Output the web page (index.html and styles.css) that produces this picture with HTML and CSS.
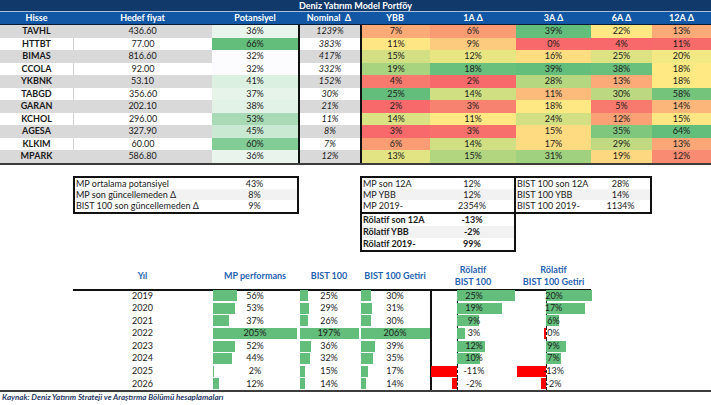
FILE: index.html
```html
<!DOCTYPE html>
<html lang="tr">
<head>
<meta charset="utf-8">
<title>Deniz Yatırım Model Portföy</title>
<link rel="stylesheet" href="styles.css">
</head>
<body>
<div class="sheet">
  <div class="title">Deniz Yatırım Model Portföy</div>
  <div class="row head">
    <div>Hisse</div><div>Hedef fiyat</div><div>Potansiyel</div><div>Nominal&nbsp; Δ</div><div>YBB</div><div>1A Δ</div><div>3A Δ</div><div>6A Δ</div><div>12A Δ</div>
  </div>
  <div class="data">
    <div class="row g"><div class="tk">TAVHL</div><div class="tp">436.60</div><div style="background:#e9f5ec">36%</div><div class="nom">1239%</div><div class="ybb" style="background:#fcaa78">7%</div><div style="background:#f99c74">6%</div><div style="background:#63be7b">39%</div><div style="background:#ffe884">22%</div><div style="background:#fcaa78">13%</div></div>
    <div class="row"><div class="tk">HTTBT</div><div class="tp">77.00</div><div style="background:#63be7b">66%</div><div class="nom">383%</div><div class="ybb" style="background:#ffe684">11%</div><div style="background:#fdcb7e">9%</div><div style="background:#f8696b">0%</div><div style="background:#f8696b">4%</div><div style="background:#f86b6b">11%</div></div>
    <div class="row g"><div class="tk">BIMAS</div><div class="tp">816.60</div><div style="background:#fcfcff">32%</div><div class="nom">417%</div><div class="ybb" style="background:#d2df82">15%</div><div style="background:#e8e583">12%</div><div style="background:#fedd81">16%</div><div style="background:#dde283">25%</div><div style="background:#f2e884">20%</div></div>
    <div class="row"><div class="tk">CCOLA</div><div class="tp">92.00</div><div style="background:#fcfcff">32%</div><div class="nom">332%</div><div class="ybb" style="background:#a8d47f">19%</div><div style="background:#69bf7c">18%</div><div style="background:#63be7b">39%</div><div style="background:#68c07c">38%</div><div style="background:#fee983">18%</div></div>
    <div class="row g"><div class="tk">YKBNK</div><div class="tp">53.10</div><div style="background:#dcf0e1">41%</div><div class="nom">152%</div><div class="ybb" style="background:#f87a6e">4%</div><div style="background:#f8696b">2%</div><div style="background:#b5d780">28%</div><div style="background:#fbaa78">13%</div><div style="background:#fee983">18%</div></div>
    <div class="row"><div class="tk">TABGD</div><div class="tp">356.60</div><div style="background:#e6f4e9">37%</div><div class="nom">30%</div><div class="ybb" style="background:#63be7b">25%</div><div style="background:#cfdf81">14%</div><div style="background:#fcbb7b">11%</div><div style="background:#bcd880">30%</div><div style="background:#74c47c">58%</div></div>
    <div class="row g"><div class="tk">GARAN</div><div class="tp">202.10</div><div style="background:#e2f2e6">38%</div><div class="nom">21%</div><div class="ybb" style="background:#f8696b">2%</div><div style="background:#f88270">3%</div><div style="background:#fee883">18%</div><div style="background:#f87a6e">5%</div><div style="background:#fcb679">14%</div></div>
    <div class="row"><div class="tk">KCHOL</div><div class="tp">296.00</div><div style="background:#a8dab5">53%</div><div class="nom">11%</div><div class="ybb" style="background:#dbe283">14%</div><div style="background:#ffe884">11%</div><div style="background:#d2df82">24%</div><div style="background:#fba176">12%</div><div style="background:#fee683">15%</div></div>
    <div class="row g"><div class="tk">AGESA</div><div class="tp">327.90</div><div style="background:#cae9d2">45%</div><div class="nom">8%</div><div class="ybb" style="background:#f8696b">3%</div><div style="background:#f8706c">3%</div><div style="background:#fedb80">15%</div><div style="background:#7fc77d">35%</div><div style="background:#63be7b">64%</div></div>
    <div class="row"><div class="tk">KLKIM</div><div class="tp">60.00</div><div style="background:#82cc95">60%</div><div class="nom">7%</div><div class="ybb" style="background:#fa9d75">6%</div><div style="background:#cfdf81">14%</div><div style="background:#feda80">17%</div><div style="background:#c1da81">29%</div><div style="background:#fba677">13%</div></div>
    <div class="row g"><div class="tk">MPARK</div><div class="tp">586.80</div><div style="background:#e9f5ec">36%</div><div class="nom">12%</div><div class="ybb" style="background:#e2e383">13%</div><div style="background:#b2d680">15%</div><div style="background:#a0d17f">31%</div><div style="background:#fed880">19%</div><div style="background:#f98b72">12%</div></div>
  </div>

  <div class="summary">
    <div class="box box-a">
      <div class="srow"><div class="lbl">MP ortalama potansiyel</div><div class="val">43%</div></div>
      <div class="srow alt"><div class="lbl">MP son güncellemeden Δ</div><div class="val">8%</div></div>
      <div class="srow"><div class="lbl">BIST 100 son güncellemeden Δ</div><div class="val">9%</div></div>
    </div>
    <div class="box box-b">
      <div class="srow"><div class="lbl">MP son 12A</div><div class="val">12%</div></div>
      <div class="srow alt"><div class="lbl">MP YBB</div><div class="val">12%</div></div>
      <div class="srow"><div class="lbl">MP 2019-</div><div class="val">2354%</div></div>
    </div>
    <div class="box box-c">
      <div class="srow"><div class="lbl">BIST 100 son 12A</div><div class="val">28%</div></div>
      <div class="srow alt"><div class="lbl">BIST 100 YBB</div><div class="val">14%</div></div>
      <div class="srow"><div class="lbl">BIST 100 2019-</div><div class="val">1134%</div></div>
    </div>
    <div class="box box-d">
      <div class="srow"><div class="lbl">Rölatif son 12A</div><div class="val">-13%</div></div>
      <div class="srow alt"><div class="lbl">Rölatif YBB</div><div class="val">-2%</div></div>
      <div class="srow"><div class="lbl">Rölatif 2019-</div><div class="val">99%</div></div>
    </div>
  </div>

  <div class="perf">
    <div class="row phead">
      <div class="blank"></div>
      <div class="hc">Yıl</div>
      <div class="hc">MP performans</div>
      <div class="hc">BIST 100</div>
      <div class="hc">BIST 100 Getiri</div>
      <div class="hc two">Rölatif<br>BIST 100</div>
      <div class="hc two">Rölatif<br>BIST 100 Getiri</div>
    </div>
    <div class="row prow"><div></div><div>2019</div>
      <div class="bc c3"><span class="bar" style="width:24px"></span><span class="t">56%</span></div>
      <div class="bc c4"><span class="bar" style="width:8px"></span><span class="t">25%</span></div>
      <div class="bc c5"><span class="bar" style="width:10px"></span><span class="t">30%</span></div>
      <div class="rc r6"><span class="axis"></span><span class="pos" style="width:58px"></span><span class="t">25%</span></div>
      <div class="rc r7"><span class="axis"></span><span class="pos" style="width:46px"></span><span class="t">20%</span></div>
    </div>
    <div class="row prow"><div></div><div>2020</div>
      <div class="bc c3"><span class="bar" style="width:22px"></span><span class="t">53%</span></div>
      <div class="bc c4"><span class="bar" style="width:9px"></span><span class="t">29%</span></div>
      <div class="bc c5"><span class="bar" style="width:11px"></span><span class="t">31%</span></div>
      <div class="rc r6"><span class="axis"></span><span class="pos" style="width:45px"></span><span class="t">19%</span></div>
      <div class="rc r7"><span class="axis"></span><span class="pos" style="width:39px"></span><span class="t">17%</span></div>
    </div>
    <div class="row prow"><div></div><div>2021</div>
      <div class="bc c3"><span class="bar" style="width:16px"></span><span class="t">37%</span></div>
      <div class="bc c4"><span class="bar" style="width:8px"></span><span class="t">26%</span></div>
      <div class="bc c5"><span class="bar" style="width:10px"></span><span class="t">30%</span></div>
      <div class="rc r6"><span class="axis"></span><span class="pos" style="width:22px"></span><span class="t">9%</span></div>
      <div class="rc r7"><span class="axis"></span><span class="pos" style="width:13px"></span><span class="t">6%</span></div>
    </div>
    <div class="row prow"><div></div><div>2022</div>
      <div class="bc c3"><span class="bar" style="width:84px"></span><span class="t">205%</span></div>
      <div class="bc c4"><span class="bar" style="width:59px"></span><span class="t">197%</span></div>
      <div class="bc c5"><span class="bar" style="width:69px"></span><span class="t">206%</span></div>
      <div class="rc r6"><span class="axis"></span><span class="pos" style="width:8px"></span><span class="t">3%</span></div>
      <div class="rc r7"><span class="axis"></span><span class="neg" style="width:2px"></span><span class="t">0%</span></div>
    </div>
    <div class="row prow"><div></div><div>2023</div>
      <div class="bc c3"><span class="bar" style="width:22px"></span><span class="t">52%</span></div>
      <div class="bc c4"><span class="bar" style="width:11px"></span><span class="t">36%</span></div>
      <div class="bc c5"><span class="bar" style="width:14px"></span><span class="t">39%</span></div>
      <div class="rc r6"><span class="axis"></span><span class="pos" style="width:28px"></span><span class="t">12%</span></div>
      <div class="rc r7"><span class="axis"></span><span class="pos" style="width:20px"></span><span class="t">9%</span></div>
    </div>
    <div class="row prow"><div></div><div>2024</div>
      <div class="bc c3"><span class="bar" style="width:19px"></span><span class="t">44%</span></div>
      <div class="bc c4"><span class="bar" style="width:10px"></span><span class="t">32%</span></div>
      <div class="bc c5"><span class="bar" style="width:12px"></span><span class="t">35%</span></div>
      <div class="rc r6"><span class="axis"></span><span class="pos" style="width:23px"></span><span class="t">10%</span></div>
      <div class="rc r7"><span class="axis"></span><span class="pos" style="width:15px"></span><span class="t">7%</span></div>
    </div>
    <div class="row prow"><div></div><div>2025</div>
      <div class="bc c3"><span class="bar" style="width:1px"></span><span class="t">2%</span></div>
      <div class="bc c4"><span class="bar" style="width:5px"></span><span class="t">15%</span></div>
      <div class="bc c5"><span class="bar" style="width:7px"></span><span class="t">17%</span></div>
      <div class="rc r6"><span class="axis"></span><span class="neg" style="width:26px"></span><span class="t">-11%</span></div>
      <div class="rc r7"><span class="axis"></span><span class="neg" style="width:29px"></span><span class="t">-13%</span></div>
    </div>
    <div class="row prow"><div></div><div>2026</div>
      <div class="bc c3"><span class="bar" style="width:6px"></span><span class="t">12%</span></div>
      <div class="bc c4"><span class="bar" style="width:5px"></span><span class="t">14%</span></div>
      <div class="bc c5"><span class="bar" style="width:5px"></span><span class="t">14%</span></div>
      <div class="rc r6"><span class="axis"></span><span class="neg" style="width:5px"></span><span class="t">-2%</span></div>
      <div class="rc r7"><span class="axis"></span><span class="neg" style="width:5px"></span><span class="t">-2%</span></div>
    </div>
  </div>
  <div class="foot">Kaynak: Deniz Yatırım Strateji ve Araştırma Bölümü hesaplamaları</div>
</div>
</body>
</html>
```

FILE: styles.css
```css
* { box-sizing: border-box; }
html, body { margin: 0; padding: 0; background: #fff; }
body {
  font-family: Lato, "Liberation Sans", Arial, sans-serif;
  font-size: 9px;
  color: #1b1b1b;
}
.sheet { width: 711px; height: 405px; overflow: hidden; }

.row {
  display: grid;
  grid-template-columns: 73px 139px 86px 62px 70px 86px 75px 61px 59px;
}

.title {
  height: 12px;
  background: #113a6b;
  color: #fff;
  font-weight: 700;
  text-align: center;
  line-height: 11px;
  border-bottom: 1px solid #a9bfdc;
}

.head {
  height: 13px;
  background: #1157a4;
  color: #fff;
  font-weight: 700;
  border-bottom: 1px solid #0a1a30;
}
.head > div { text-align: center; line-height: 12px; }

.data { border-bottom: 2px solid #3c3c3c; }
.data .row { height: 12.5px; }
.data .row > div {
  text-align: center;
  line-height: 12.5px;
  white-space: nowrap;
}
.data .row.g { background: #d9d9d9; }
.data .row:not(.g) .tp { border-left: 1px solid #d4d4d4; }
.tk { font-weight: 700; }
.nom {
  font-style: italic;
  border-left: 2px solid #111;
}
.ybb { border-left: 2px solid #111; }

/* summary boxes */
.summary {
  display: grid;
  grid-template-columns: 73px 139px 86px 62px 70px 86px 75px 61px 59px;
  margin-top: 11px;
}
.box {
  border: 2px solid #111;
  display: flex;
  flex-direction: column;
}
.box-a { grid-column: 2 / 4; grid-row: 1; height: 38px; margin-right: -1px; }
.box-b { grid-column: 5 / 7; grid-row: 1; height: 38px; }
.box-c { grid-column: 7 / 9; grid-row: 1; height: 38px; margin-left: -2px; }
.box-d { grid-column: 5 / 7; grid-row: 2; height: 40px; margin-top: -2px; font-weight: 700; }
.srow {
  flex: 1;
  display: grid;
  align-items: center;
  white-space: nowrap;
}
.box-a .srow { grid-template-columns: 137px 1fr; }
.box-b .srow, .box-d .srow { grid-template-columns: 68px 1fr; }
.box-c .srow { grid-template-columns: 75px 1fr; }
.srow.alt { background: #f2f2f2; }
.lbl { padding-left: 1px; }
.val { text-align: center; }

/* performance table */
.perf { margin-top: 12px; }
.phead { height: 26px; }
.hc {
  color: #1f62b0;
  font-weight: 700;
  text-align: center;
  border-bottom: 2px solid #111;
  display: flex;
  align-items: center;
  justify-content: center;
  line-height: 12.5px;
}
.hc.two { align-items: flex-end; padding-bottom: 0; }
.prow { height: 12.6px; }
.prow > div {
  text-align: center;
  line-height: 12.6px;
  white-space: nowrap;
}
.bc, .rc {
  display: grid;
  grid-template-rows: 1fr;
}
.bc { grid-template-columns: 1fr; }
.bc > * { grid-row: 1; grid-column: 1; }
.bar {
  justify-self: start;
  align-self: center;
  height: 11px;
  background: #63be7b;
}
.c3 .bar { margin-left: 1px; }
.c4 .bar { margin-left: 2px; }
.c5 .bar { margin-left: 1px; }
.t { justify-self: center; position: relative; }

.rc > * { grid-row: 1; }
.r6 { grid-template-columns: 27px 1fr; border-left: 2px solid #111; }
.r6 { grid-template-columns: 25px 1fr; }
.r7 { grid-template-columns: 30px 1fr; }
.rc .axis {
  grid-column: 2;
  justify-self: start;
  align-self: stretch;
  width: 0;
  border-left: 1px dashed #222;
}
.rc .pos {
  grid-column: 2;
  justify-self: start;
  align-self: center;
  height: 11px;
  background: #63be7b;
}
.rc .neg {
  grid-column: 1;
  justify-self: end;
  align-self: center;
  height: 11px;
  background: #ff0000;
}
.rc .t { grid-column: 1 / -1; }

.foot {
  border-top: 2px solid #3c3c3c;
  font-size: 8px;
  font-style: italic;
  font-weight: 700;
  color: #1f3864;
  padding-left: 2px;
  line-height: 11px;
}
```
